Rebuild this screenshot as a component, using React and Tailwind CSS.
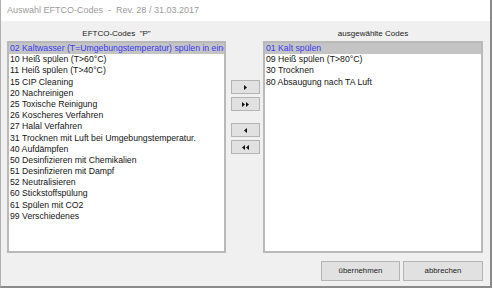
import React from "react";

const leftItems = [
  "02 Kaltwasser (T=Umgebungstemperatur) spülen in einem Schritt",
  "10 Heiß spülen (T>60°C)",
  "11 Heiß spülen (T>40°C)",
  "15 CIP Cleaning",
  "20 Nachreinigen",
  "25 Toxische Reinigung",
  "26 Koscheres Verfahren",
  "27 Halal Verfahren",
  "31 Trocknen mit Luft bei Umgebungstemperatur.",
  "40 Aufdämpfen",
  "50 Desinfizieren mit Chemikalien",
  "51 Desinfizieren mit Dampf",
  "52 Neutralisieren",
  "60 Stickstoffspülung",
  "61 Spülen mit CO2",
  "99 Verschiedenes",
];

const rightItems = [
  "01 Kalt spülen",
  "09 Heiß spülen (T>80°C)",
  "30 Trocknen",
  "80 Absaugung nach TA Luft",
];

function ListBox({ items, width }) {
  return (
    <div
      className={`${width} h-[212px] bg-white border-2 border-[#b9b9b9] overflow-hidden`}
    >
      {items.map((t, i) => (
        <div
          key={i}
          className={
            i === 0
              ? "h-[11.2px] leading-[11.2px] pl-[1px] whitespace-nowrap overflow-hidden bg-[#c4c4c4] text-[#3b3bf0]"
              : "h-[11.2px] leading-[11.2px] pl-[1px] whitespace-nowrap text-[#141414]"
          }
        >
          {t}
        </div>
      ))}
    </div>
  );
}

function Tri({ dir }) {
  return dir === "r" ? <polygon points="0,0 3,2.5 0,5" /> : <polygon points="3,0 0,2.5 3,5" />;
}

function ArrowBtn({ dir, double }) {
  return (
    <div className="w-[29px] h-[14px] bg-[#e1e1e1] border border-[#b4b4b4] flex items-center justify-center">
      {double ? (
        <svg width="7" height="5" viewBox="0 0 7 5" fill="#111">
          {dir === "r" ? (
            <>
              <polygon points="0,0 3,2.5 0,5" />
              <polygon points="4,0 7,2.5 4,5" />
            </>
          ) : (
            <>
              <polygon points="3,0 0,2.5 3,5" />
              <polygon points="7,0 4,2.5 7,5" />
            </>
          )}
        </svg>
      ) : (
        <svg width="3" height="5" viewBox="0 0 3 5" fill="#111">
          <Tri dir={dir} />
        </svg>
      )}
    </div>
  );
}

export default function App() {
  return (
    <div
      className="w-[493px] h-[289px] bg-white"
      style={{ fontFamily: '"Liberation Sans", Arial, sans-serif' }}
    >
      <div className="w-[492px] h-[288px] flex flex-col border-l border-l-[#b0b0b0] border-r-2 border-r-[#8a8a8a] border-b-2 border-b-[#8a8a8a]">
        <div className="h-[21px] bg-white flex items-center pl-[6px] text-[9px] text-[#9c9c9c] whitespace-pre">
          {"Auswahl EFTCO-Codes  -  Rev. 28 / 31.03.2017"}
        </div>
        <div className="flex-1 bg-[#f0f0f0] flex flex-col pl-[6px] pr-[7px] pt-[6px]">
          <div className="flex">
            <div className="flex flex-col">
              <div className="h-[14px] leading-[14px] text-center text-[8px] text-[#222] whitespace-pre">
                {'EFTCO-Codes  "P"'}
              </div>
              <div className="text-[8.7px]">
                <ListBox items={leftItems} width="w-[219px]" />
              </div>
            </div>
            <div className="ml-[5px] mr-[3px] pt-[53px] flex flex-col">
              <ArrowBtn dir="r" />
              <div className="mt-[3px]">
                <ArrowBtn dir="r" double />
              </div>
              <div className="mt-[12px]">
                <ArrowBtn dir="l" />
              </div>
              <div className="mt-[3px]">
                <ArrowBtn dir="l" double />
              </div>
            </div>
            <div className="flex flex-col">
              <div className="h-[14px] leading-[14px] text-center text-[8px] text-[#222]">
                ausgewählte Codes
              </div>
              <div className="text-[8.7px]">
                <ListBox items={rightItems} width="w-[220px]" />
              </div>
            </div>
          </div>
          <div className="flex justify-end gap-[3px] mt-[8px]">
            <div className="w-[79px] h-[20px] bg-[#e1e1e1] border border-[#b4b4b4] flex items-center justify-center text-[7.8px] text-[#222]">
              übernehmen
            </div>
            <div className="w-[80px] h-[20px] bg-[#e1e1e1] border border-[#b4b4b4] flex items-center justify-center text-[7.8px] text-[#222]">
              abbrechen
            </div>
          </div>
        </div>
      </div>
    </div>
  );
}
